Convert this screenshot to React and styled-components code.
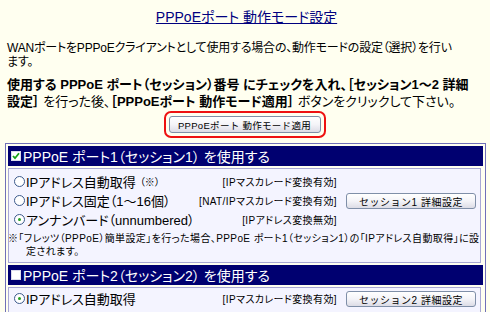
import React from "react";
import styled, { createGlobalStyle } from "styled-components";

const Global = createGlobalStyle`
  html, body {
    margin: 0;
    padding: 0;
    background: #fffff0;
  }
  body {
    font-family: "Liberation Sans", "Noto Sans CJK JP", sans-serif;
    font-feature-settings: "palt";
    color: #000;
    overflow: hidden;
  }
`;

const Page = styled.div`
  width: 490px;
  height: 312px;
  padding: 0 4px 0 7px;
  box-sizing: border-box;
  overflow: hidden;
`;

const Title = styled.h1`
  margin: 0;
  padding-top: 8px;
  text-align: center;
  font-size: 14px;
  line-height: 18px;
  font-weight: normal;
  a {
    color: #00007f;
    text-decoration: underline;
  }
`;

const Lead = styled.p`
  margin: 15px 0 0;
  font-size: 12px;
  line-height: 14px;
  letter-spacing: -0.2px;
`;

const Strong = styled.p`
  margin: 7px 0 0;
  font-size: 13px;
  line-height: 17px;
  b {
    font-weight: bold;
  }
`;

const ApplyRow = styled.div`
  display: flex;
  justify-content: center;
  margin-top: 1px;
  padding-right: 4px;
`;

const Highlight = styled.div`
  border: 2px solid #ee1111;
  border-radius: 7px;
  padding: 3px 3px;
  display: flex;
`;

const Button = styled.button`
  width: ${(p) => p.$w}px;
  height: ${(p) => p.$h}px;
  padding: 0;
  font-family: inherit;
  font-size: ${(p) => p.$fs || 10}px;
  letter-spacing: ${(p) => p.$ls || 0}px;
  color: #000;
  border: 1px solid #7f8fa8;
  border-radius: 3px;
  background: linear-gradient(#ffffff, #f4f4f8 50%, #dcdce6);
  white-space: nowrap;
`;

const Panel = styled.div`
  margin: 5px 0 0 -2px;
  border: 1px solid #7070b8;
  padding: 2px 2px 0 2px;
  display: flex;
  flex-direction: column;
  gap: 2px;
`;

const Header = styled.div`
  height: 20px;
  background: #000070;
  color: #fff;
  font-size: 14px;
  display: flex;
  align-items: center;
  padding-left: 3px;
  gap: 2px;
  white-space: nowrap;
`;

const Box = styled.span`
  width: 8px;
  height: 8px;
  background: #fff;
  border: 1px solid #dcdcec;
  display: inline-flex;
  align-items: center;
  justify-content: center;
  svg {
    display: block;
  }
`;

const Body = styled.div`
  margin-right: 2px;
  border: 1px solid #a8a8d4;
  background: #f4f4ff;
  padding: ${(p) => (p.$last ? "1px 0 10px" : "3px 0 4px")};
`;

const Row = styled.div`
  display: grid;
  grid-template-columns: 1fr auto 130px;
  column-gap: 9px;
  padding-right: 4px;
  align-items: center;
  height: 19px;
`;

const Choice = styled.label`
  display: flex;
  align-items: center;
  padding-left: 5px;
  font-size: 13px;
  white-space: nowrap;
  small {
    font-size: 10px;
    margin-left: 4px;
  }
`;

const Radio = styled.span`
  width: 9px;
  height: 9px;
  border-radius: 50%;
  border: 1px solid #3c5a8c;
  background: #fff;
  margin-right: 1px;
  display: inline-flex;
  align-items: center;
  justify-content: center;
  &::after {
    content: "";
    width: 3px;
    height: 3px;
    border-radius: 50%;
    background: ${(p) => (p.$on ? "#21a121" : "transparent")};
  }
`;

const Mode = styled.span`
  font-size: 10px;
  letter-spacing: 0.4px;
  text-align: right;
  white-space: nowrap;
`;

const ButtonCell = styled.div`
  display: flex;
`;

const Note = styled.p`
  margin: 3px 0 0 -1px;
  font-size: 10px;
  line-height: 13px;
  letter-spacing: 0.4px;
  padding-left: 18px;
  text-indent: -18px;
`;

const Check = () => (
  <svg width="8" height="8" viewBox="0 0 8 8">
    <path d="M1 4 L3 6.2 L7 1.3" fill="none" stroke="#17a017" strokeWidth="1.8" />
  </svg>
);

const sessions = [
  {
    n: 1,
    checked: true,
    rows: [
      { label: "IPアドレス自動取得", tag: "（※）", mode: "[IPマスカレード変換有効]" },
      { label: "IPアドレス固定（1〜16個）", mode: "[NAT/IPマスカレード変換有効]", btn: true },
      { label: "アンナンバード（unnumbered）", mode: "[IPアドレス変換無効]", on: true },
    ],
    note: true,
  },
  {
    n: 2,
    checked: false,
    rows: [
      { label: "IPアドレス自動取得", mode: "[IPマスカレード変換有効]", btn: true, on: true },
    ],
  },
];

export default function App() {
  return (
    <Page>
      <Global />
      <Title>
        <a href="#">PPPoEポート 動作モード設定</a>
      </Title>
      <Lead>
        WANポートをPPPoEクライアントとして使用する場合の、動作モードの設定（選択）を行い
        <br />
        ます。
      </Lead>
      <Strong>
        <b>使用する PPPoE ポート（セッション）番号 にチェックを入れ、［セッション1〜2 詳細</b>
        <br />
        <b>設定］</b> を行った後、<b>［PPPoEポート 動作モード適用］</b> ボタンをクリックして下さい。
      </Strong>
      <ApplyRow>
        <Highlight>
          <Button $w={152} $h={17} $fs={9.5} $ls={0.3}>
            PPPoEポート 動作モード適用
          </Button>
        </Highlight>
      </ApplyRow>
      <Panel>
        {sessions.map((s) => (
          <React.Fragment key={s.n}>
            <Header>
              <Box>{s.checked && <Check />}</Box>
              PPPoE ポート{s.n}（セッション{s.n}） を使用する
            </Header>
            <Body $last={!s.note}>
              {s.rows.map((r, i) => (
                <Row key={i}>
                  <Choice>
                    <Radio $on={r.on} />
                    {r.label}
                    {r.tag && <small>{r.tag}</small>}
                  </Choice>
                  <Mode>{r.mode}</Mode>
                  <ButtonCell>
                    {r.btn && (
                      <Button $w={130} $h={16} $ls={0.5}>
                        セッション{s.n} 詳細設定
                      </Button>
                    )}
                  </ButtonCell>
                </Row>
              ))}
              {s.note && (
                <Note>
                  ※「フレッツ（PPPoE）簡単設定」を行った場合、PPPoE ポート1（セッション1）の「IPアドレス自動取得」に設
                  <br />
                  定されます。
                </Note>
              )}
            </Body>
          </React.Fragment>
        ))}
      </Panel>
    </Page>
  );
}
